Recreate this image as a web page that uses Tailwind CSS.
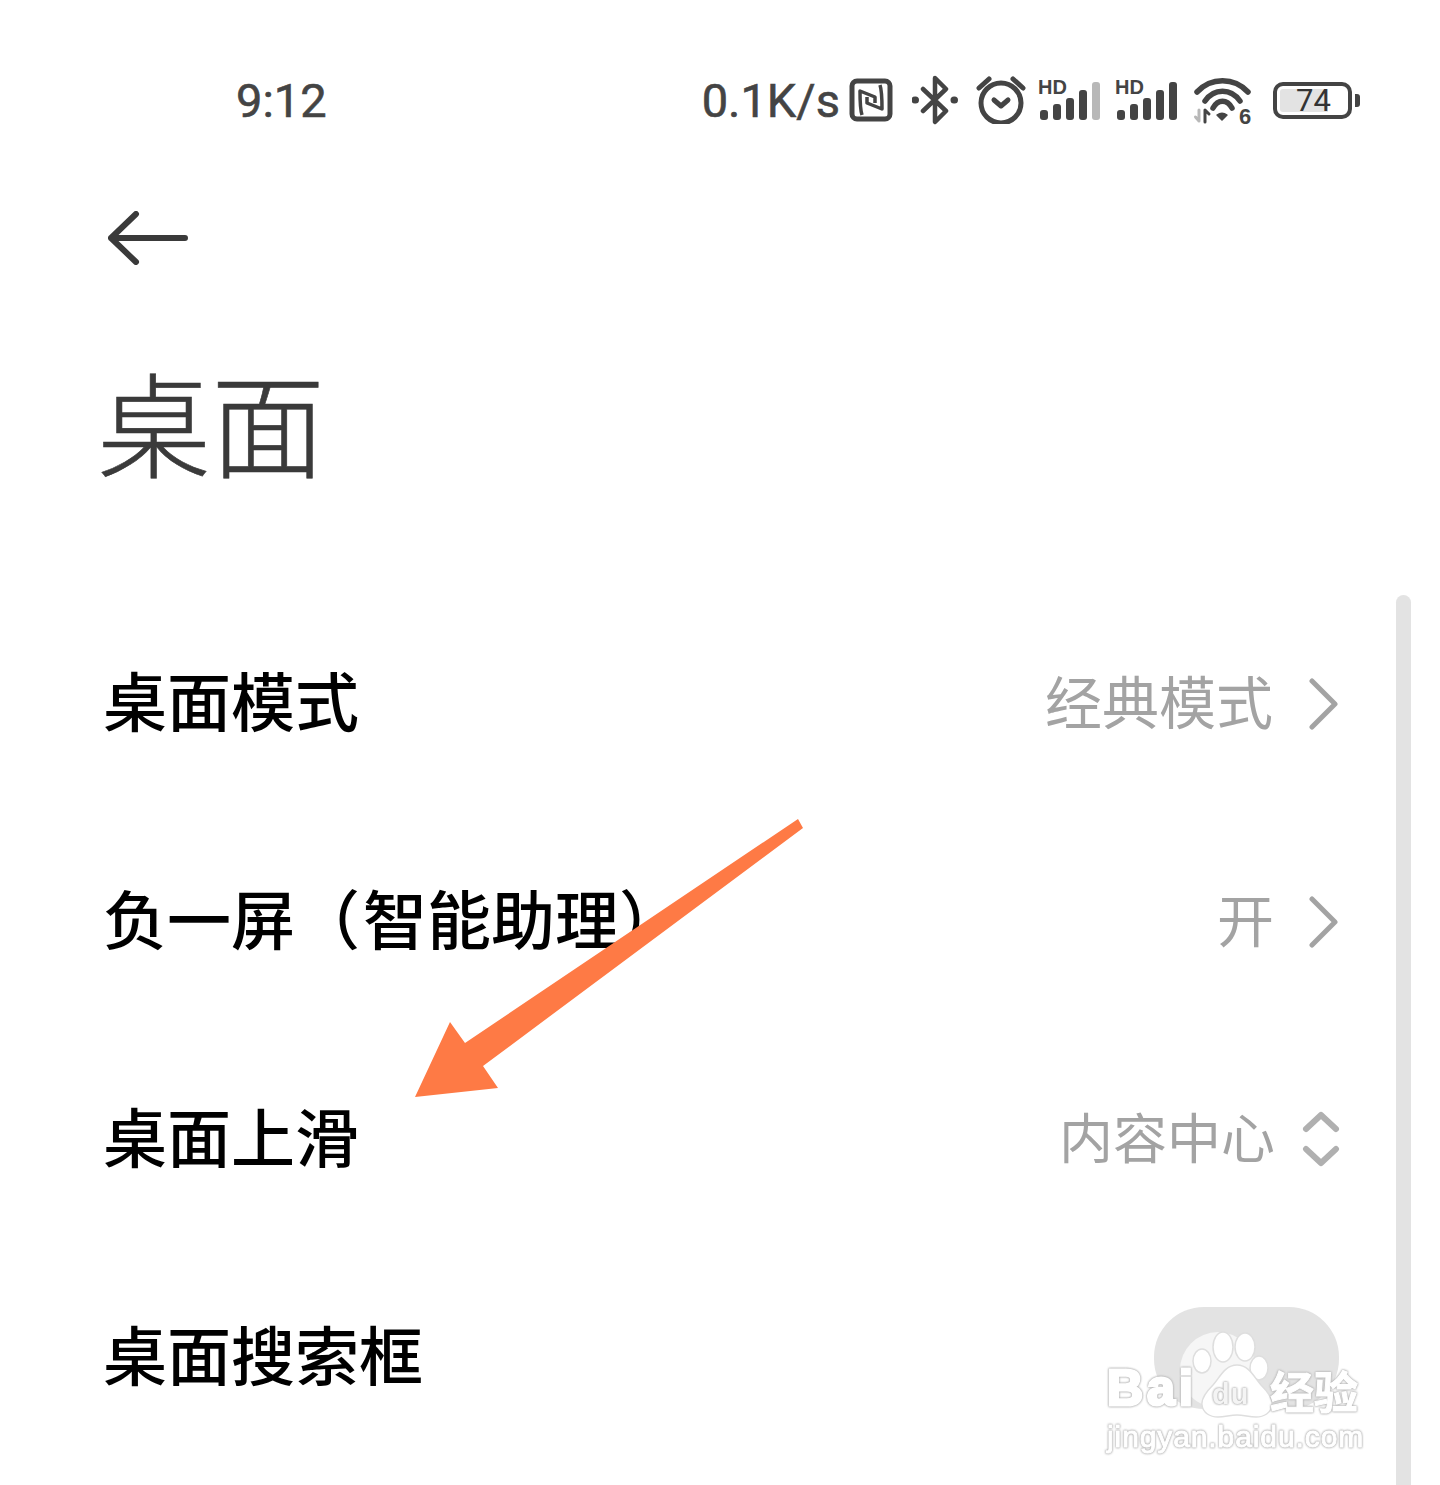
<!DOCTYPE html>
<html lang="zh-CN">
<head>
    <meta charset="UTF-8">
    <title>桌面</title>
    <script src="https://cdn.jsdelivr.net/npm/@tailwindcss/browser@4"></script>
</head>
<body class="bg-white font-['Noto_Sans_CJK_SC',sans-serif]">
<div class="relative w-[1440px] h-[1485px] overflow-hidden bg-white">

    <!-- status bar -->
    <div class="h-[200px] pl-[236px] pr-[80px] flex items-center justify-between text-[#444]">
        <span class="font-['Roboto',sans-serif] text-[47px] leading-none [-webkit-text-stroke:0.6px_#444]">9:12</span>
        <div class="flex items-center">
            <span class="font-['Roboto',sans-serif] text-[47px] leading-none mr-[9px] [-webkit-text-stroke:0.6px_#444]">0.1K/s</span>
            <!-- nfc -->
            <svg class="w-[44px] h-[44px] mr-[19px]" viewBox="0 0 44 44" fill="none" stroke="#444">
                <rect x="3" y="3" width="38" height="38" rx="5" stroke-width="5"/>
                <path d="M13 37c-2-6-2-16-2-24l15 6v6M31 7c2 6 2 16 2 24l-15-6v-6" stroke-width="3.500" stroke-linejoin="round"/>
            </svg>
            <!-- bluetooth -->
            <svg class="w-[46px] h-[50px] mr-[17px]" viewBox="0 0 46 50" fill="none" stroke="#444" stroke-width="4.500" stroke-linecap="round" stroke-linejoin="round">
                <path d="M11 14l23 22-11 11V3l11 11-23 22"/>
                <path d="M3 25h.5M42 25h.5" stroke-width="7"/>
            </svg>
            <!-- alarm -->
            <svg class="w-[52px] h-[48px] mr-[11px]" viewBox="0 0 52 48" fill="none" stroke="#444" stroke-linecap="round" stroke-linejoin="round">
                <circle cx="26" cy="27" r="20" stroke-width="5"/>
                <path d="M4 12L14 3M48 12L38 3" stroke-width="5"/>
                <path d="M19 24l7 6 7-6" stroke-width="5"/>
            </svg>
            <!-- signal 1 -->
            <div class="relative w-[64px] h-[40px] mr-[13px]">
                <span class="absolute left-0 top-[-3px] font-['Liberation_Sans',sans-serif] font-bold text-[20px] leading-none">HD</span>
                <div class="absolute left-[2px] bottom-0 flex items-end gap-[5px]">
                    <div class="w-[8px] h-[10px] rounded-[3px] bg-[#444]"></div>
                    <div class="w-[8px] h-[16px] rounded-[3px] bg-[#444]"></div>
                    <div class="w-[8px] h-[22px] rounded-[3px] bg-[#444]"></div>
                    <div class="w-[8px] h-[30px] rounded-[3px] bg-[#444]"></div>
                    <div class="w-[8px] h-[38px] rounded-[3px] bg-[#b8b8b8]"></div>
                </div>
            </div>
            <!-- signal 2 -->
            <div class="relative w-[64px] h-[40px] mr-[15px]">
                <span class="absolute left-0 top-[-3px] font-['Liberation_Sans',sans-serif] font-bold text-[20px] leading-none">HD</span>
                <div class="absolute left-[2px] bottom-0 flex items-end gap-[5px]">
                    <div class="w-[8px] h-[10px] rounded-[3px] bg-[#444]"></div>
                    <div class="w-[8px] h-[16px] rounded-[3px] bg-[#444]"></div>
                    <div class="w-[8px] h-[22px] rounded-[3px] bg-[#444]"></div>
                    <div class="w-[8px] h-[30px] rounded-[3px] bg-[#444]"></div>
                    <div class="w-[8px] h-[38px] rounded-[3px] bg-[#444]"></div>
                </div>
            </div>
            <!-- wifi -->
            <svg class="w-[60px] h-[48px] mr-[19px] overflow-visible" viewBox="0 0 60 48" fill="none" stroke="#444" stroke-linecap="round">
                <path d="M3 16C17 1 40 1 54 16" stroke-width="5.500"/>
                <path d="M11 25C20 12 37 12 46 25" stroke-width="5.500"/>
                <path d="M19 32C24 23 33 23 38 32" stroke-width="5.500"/>
                <path d="M23 39c3-2 7-2 10 0l-5 5z" fill="#444" stroke-width="1.500" stroke-linejoin="round"/>
                <path d="M5 34v11M1.500 41l3.500 4" stroke="#b8b8b8" stroke-width="3"/>
                <path d="M11 46V34M15 38l-4-4" stroke-width="3"/>
                <text x="45" y="48" font-family="Liberation Sans" font-weight="700" font-size="22" fill="#444" stroke="none">6</text>
            </svg>
            <!-- battery -->
            <div class="flex items-center">
                <div class="relative w-[79px] h-[37px] border-[4px] border-[#444] rounded-[10px] flex items-center p-[3px]">
                    <div class="w-[48px] h-full bg-[#e3e3e3] rounded-l-[3px]"></div>
                    <span class="absolute left-[19px] top-[1px] font-['Roboto',sans-serif] text-[31px] leading-[27px] text-[#333]">74</span>
                </div>
                <div class="w-[5px] h-[13px] ml-[3px] rounded-r-[3px] bg-[#444]"></div>
            </div>
        </div>
    </div>

    <!-- back + title -->
    <div class="pl-[108px] pt-[11px] h-[91px]">
        <svg class="w-[80px] h-[54px] block" viewBox="0 0 80 54" fill="none" stroke="#3a3a3a" stroke-width="6" stroke-linecap="round" stroke-linejoin="round">
            <path d="M3 27h74M28 3L3 27l25 24"/>
        </svg>
    </div>
    <h1 class="pl-[97px] mt-[54px] font-light text-[114px] leading-[150px] text-[#3a3a3a] [-webkit-text-stroke:0.6px_#3a3a3a]">桌面</h1>

    <!-- settings list -->
    <div class="mt-[100px] pl-[103px] pr-[100px]">
        <div class="h-[218px] flex items-center justify-between">
            <span class="pb-[12px] text-[64px] font-medium text-black">桌面模式</span>
            <div class="flex items-center text-[#a3a3a3]">
                <span class="pb-[8px] text-[57px] mr-[35px]">经典模式</span>
                <svg class="w-[32px] h-[52px]" viewBox="0 0 32 52" fill="none" stroke="#a3a3a3" stroke-width="5" stroke-linecap="round" stroke-linejoin="round"><path d="M4 3l23 23L4 49"/></svg>
            </div>
        </div>
        <div class="h-[218px] flex items-center justify-between">
            <span class="pb-[12px] text-[64px] font-medium text-black">负一屏<span class="ml-[1px]">（</span><span class="ml-[3px]">智能助理</span>）</span>
            <div class="flex items-center text-[#a3a3a3]">
                <span class="pb-[8px] text-[57px] mr-[34px]">开</span>
                <svg class="w-[32px] h-[52px]" viewBox="0 0 32 52" fill="none" stroke="#a3a3a3" stroke-width="5" stroke-linecap="round" stroke-linejoin="round"><path d="M4 3l23 23L4 49"/></svg>
            </div>
        </div>
        <div class="h-[218px] flex items-center justify-between">
            <span class="pb-[12px] text-[64px] font-medium text-black">桌面上滑</span>
            <div class="flex items-center text-[#a3a3a3]">
                <span class="pb-[10px] text-[54px] mr-[27px]">内容中心</span>
                <svg class="w-[38px] h-[56px] -mt-[2px]" viewBox="0 0 38 56" fill="none" stroke="#b0b0b0" stroke-width="6" stroke-linecap="round" stroke-linejoin="round"><path d="M4 18L19 4l15 14M4 38l15 14 15-14"/></svg>
            </div>
        </div>
        <div class="h-[218px] flex items-center justify-between">
            <span class="pb-[12px] text-[64px] font-medium text-black">桌面搜索框</span>
        </div>
    </div>

    <!-- scrollbar -->
    <div class="absolute left-[1396px] top-[595px] w-[15px] h-[900px] rounded-t-[8px] bg-[#e3e3e3]"></div>

    <!-- annotation arrow -->
    <svg class="absolute left-0 top-0 w-[1440px] h-[1485px] pointer-events-none" viewBox="0 0 1440 1485">
        <path d="M798 819L803 828L483 1066L498 1088L415 1097L450 1022L465 1043Z" fill="#fe7a45"/>
    </svg>

    <!-- floating bubble + watermark -->
    <div class="absolute left-[1154px] top-[1307px] w-[185px] h-[102px] rounded-[50px] bg-[#e3e3e3]"></div>
    <svg class="absolute left-[1170px] top-[1325px] w-[180px] h-[100px] overflow-visible" viewBox="0 0 180 100" fill="#fff" stroke="#dedede" stroke-width="1.500">
        <circle cx="48" cy="45" r="38" fill="#f6f6f6" stroke="none"/>
        <ellipse cx="32" cy="36" rx="9" ry="12"/>
        <ellipse cx="53" cy="22" rx="10" ry="15"/>
        <ellipse cx="75" cy="22" rx="10" ry="14"/>
        <ellipse cx="89" cy="43" rx="9" ry="12"/>
        <path d="M67 40c12 0 17 12 24 20c8 8 12 14 11 20c-1 8-8 12-16 12c-7 0-12-2-19-2c-7 0-12 2-19 2c-8 0-15-4-16-12c-1-6 3-12 11-20c7-8 12-20 24-20z"/>
    </svg>
    <div class="absolute left-[1105px] top-[1360px] w-[262px] h-[100px] text-white font-['Liberation_Sans',sans-serif] [filter:drop-shadow(0_0_1px_#b5b5b5)_drop-shadow(0_0_0.5px_#b5b5b5)]">
        <span class="absolute left-[2px] top-[-2px] text-[50px] leading-[60px] font-bold tracking-[4px] [-webkit-text-stroke:3px_#fff]">Bai</span>
        <span class="absolute left-[107px] top-[19px] text-[29px] leading-[30px] font-bold tracking-[1px] text-[#f4f4f4]">du</span>
        <span class="absolute left-[165px] top-[0px] text-[44px] leading-[60px] font-['Noto_Sans_CJK_SC',sans-serif] font-bold [-webkit-text-stroke:1px_#fff]">经验</span>
        <span class="absolute left-[2px] top-[60px] text-[30px] leading-[34px] tracking-[0.9px] [-webkit-text-stroke:1px_#fff]">jingyan.baidu.com</span>
    </div>
</div>
</body>
</html>
